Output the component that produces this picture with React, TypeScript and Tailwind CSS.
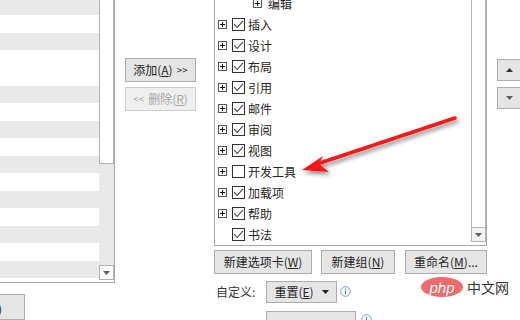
import React from "react";

const leftRows: { h: number; gray: boolean }[] = [
  { h: 15, gray: true },
  { h: 18, gray: false },
  { h: 17, gray: true },
  { h: 36, gray: false },
  { h: 17, gray: true },
  { h: 18, gray: false },
  { h: 17, gray: true },
  { h: 18, gray: false },
  { h: 17, gray: true },
  { h: 18, gray: false },
  { h: 17, gray: true },
  { h: 18, gray: false },
  { h: 17, gray: true },
  { h: 18, gray: false },
  { h: 17, gray: true },
];

const tabs: { label: string; checked: boolean; expand: boolean }[] = [
  { label: "插入", checked: true, expand: true },
  { label: "设计", checked: true, expand: true },
  { label: "布局", checked: true, expand: true },
  { label: "引用", checked: true, expand: true },
  { label: "邮件", checked: true, expand: true },
  { label: "审阅", checked: true, expand: true },
  { label: "视图", checked: true, expand: true },
  { label: "开发工具", checked: false, expand: true },
  { label: "加载项", checked: true, expand: true },
  { label: "帮助", checked: true, expand: true },
  { label: "书法", checked: true, expand: false },
];

const DownTri = () => (
  <svg width="7" height="4" viewBox="0 0 7 4">
    <path d="M0 0h7L3.5 4z" fill="#606060" />
  </svg>
);

const UpTri = () => (
  <svg width="7" height="4" viewBox="0 0 7 4">
    <path d="M0 4h7L3.5 0z" fill="#333" />
  </svg>
);

const ExpandBox = () => (
  <div className="flex h-[9px] w-[9px] items-center justify-center border border-[#555] bg-white">
    <svg width="7" height="7" viewBox="0 0 7 7">
      <path d="M1 3.5h5M3.5 1v5" stroke="#111" strokeWidth="1" />
    </svg>
  </div>
);

const CheckBox = ({ checked }: { checked: boolean }) => (
  <div className="flex h-[13px] w-[13px] items-center justify-center border border-[#333] bg-white">
    {checked && (
      <svg width="11" height="11" viewBox="0 0 11 11">
        <path d="M1.2 5.2l3 3.3L10 1.8" fill="none" stroke="#444" strokeWidth="1.1" />
      </svg>
    )}
  </div>
);

const InfoIcon = () => (
  <svg width="11" height="11" viewBox="0 0 11 11">
    <circle cx="5.5" cy="5.5" r="4.8" fill="none" stroke="#6d9be0" strokeWidth="1" />
    <path d="M5.5 4.6v3.4" stroke="#3f73c4" strokeWidth="1.1" />
    <circle cx="5.5" cy="3.2" r="0.7" fill="#3f73c4" />
  </svg>
);

const Btn = ({ className, children, disabled }: { className: string; children: React.ReactNode; disabled?: boolean }) => (
  <div
    className={`flex items-center justify-center border text-[12px] leading-none ${
      disabled ? "border-[#cccccc] bg-[#efefef] text-[#a6a6a6]" : "border-[#adadad] bg-[#e5e5e5] text-[#262626]"
    } ${className}`}
  >
    {children}
  </div>
);

const App = () => {
  return (
    <div className="relative flex h-[320px] w-[520px] overflow-hidden bg-white font-['Microsoft_YaHei','Noto_Sans_CJK_SC',sans-serif] text-[#262626]">
      {/* left list */}
      <div className="flex w-[115px] shrink-0 flex-col">
        <div className="flex h-[296px] border-b border-r border-[#a9a9a9]">
          <div className="flex w-[99px] flex-col">
            {leftRows.map((r, i) => (
              <div key={i} style={{ height: r.h }} className={r.gray ? "bg-[#e9e9e9]" : "bg-white"} />
            ))}
          </div>
          <div className="flex w-[15px] flex-col">
            <div className="h-[164px] border-x border-b border-[#b3b3b3] bg-white" />
            <div className="flex-1 bg-[#e8e8e8]" />
            <div className="mb-[2px] flex h-[15px] items-center justify-center border border-[#b3b3b3] bg-white">
              <DownTri />
            </div>
          </div>
        </div>
        <Btn className="ml-[-72px] mt-[11px] h-[26px] w-[97px] shrink-0 items-start pt-[8px]">
          自定义(<span className="underline">T</span>)
        </Btn>
      </div>

      {/* middle buttons */}
      <div className="flex w-[99px] shrink-0 flex-col pl-[10px] pt-[58px]">
        <Btn className="h-[24px] w-[71px]">
          添加(<span className="underline">A</span>)<span className="ml-[4px] text-[10px]">&gt;&gt;</span>
        </Btn>
        <Btn disabled className="mt-[5px] h-[24px] w-[71px]">
          <span className="mr-[4px] text-[10px]">&lt;&lt;</span>删除(<span className="underline">R</span>)
        </Btn>
      </div>

      {/* right list */}
      <div className="flex w-[273px] shrink-0 flex-col">
        <div className="flex h-[248px] border-x border-b border-[#a9a9a9]">
          <div className="mt-[-7px] flex flex-1 flex-col pl-[3px]">
            <div className="flex h-[21px] items-center pl-[35px] text-[12px]">
              <ExpandBox />
              <span className="ml-[6px]">编辑</span>
            </div>
            {tabs.map((t) => (
              <div key={t.label} className="flex h-[21px] items-center text-[12px]">
                {t.expand ? <ExpandBox /> : <div className="w-[9px]" />}
                <div className="ml-[5px]">
                  <CheckBox checked={t.checked} />
                </div>
                <span className="ml-[3px]">{t.label}</span>
              </div>
            ))}
          </div>
          <div className="flex w-[15px] flex-col">
            <div className="flex-1 border-x border-[#b3b3b3] bg-white" />
            <div className="mb-[3px] flex h-[15px] items-center justify-center border border-[#b3b3b3] bg-[#f3f3f3]">
              <DownTri />
            </div>
          </div>
        </div>

        <div className="mt-[4px] flex">
          <Btn className="h-[24px] w-[98px]">
            新建选项卡(<span className="underline">W</span>)
          </Btn>
          <Btn className="ml-[9px] h-[24px] w-[74px]">
            新建组(<span className="underline">N</span>)
          </Btn>
          <Btn className="ml-[10px] h-[24px] w-[82px]">
            重命名(<span className="underline">M</span>)...
          </Btn>
        </div>

        <div className="mt-[7px] flex items-center">
          <span className="w-[52px] pl-[2px] text-[12px] text-[#333]">自定义:</span>
          <Btn className="h-[22px] w-[71px]">
            重置(<span className="underline">E</span>)
            <span className="ml-[8px]">
              <svg width="7" height="4" viewBox="0 0 7 4">
                <path d="M0 0h7L3.5 4z" fill="#222" />
              </svg>
            </span>
          </Btn>
          <div className="ml-[3px] mt-[-2px]">
            <InfoIcon />
          </div>
        </div>

        <div className="mt-[8px] flex items-start">
          <div className="ml-[52px]">
            <Btn className="h-[26px] w-[90px] items-start pt-[8px]">导入/导出(P)</Btn>
          </div>
          <div className="ml-[5px] mt-[3px]">
            <InfoIcon />
          </div>
        </div>
      </div>

      {/* move up / down */}
      <div className="ml-[10px] flex flex-col pt-[59px]">
        <div className="flex h-[22px] w-[28px] items-center justify-center border border-[#adadad] bg-[#e5e5e5] pr-[3px]">
          <UpTri />
        </div>
        <div className="mt-[6px] flex h-[22px] w-[28px] items-center justify-center border border-[#adadad] bg-[#e5e5e5] pr-[3px]">
          <DownTri />
        </div>
      </div>

      {/* red annotation arrow */}
      <svg className="pointer-events-none absolute inset-0" width="520" height="320" viewBox="0 0 520 320">
        <defs>
          <filter id="sh" x="-20%" y="-50%" width="140%" height="200%">
            <feDropShadow dx="2" dy="3" stdDeviation="2" floodColor="#000" floodOpacity="0.45" />
          </filter>
        </defs>
        <g filter="url(#sh)">
          <path d="M455 118 L320 163" stroke="#ff1414" strokeWidth="3.5" strokeLinecap="round" />
          <path d="M302 170 L323 156 L319 164 L329 172 Z" fill="#ff1414" />
        </g>
      </svg>

      {/* watermark */}
      <div className="pointer-events-none absolute left-[421px] top-[277px] flex items-center">
        <div className="flex h-[20px] w-[42px] items-center justify-center rounded-[50%] bg-[#ef6a6a]">
          <span className="font-['Liberation_Sans',sans-serif] text-[15px] italic leading-none text-white">php</span>
        </div>
        <span className="ml-[4px] text-[14px] leading-none text-[#333]">中文网</span>
      </div>
    </div>
  );
};

export default App;
